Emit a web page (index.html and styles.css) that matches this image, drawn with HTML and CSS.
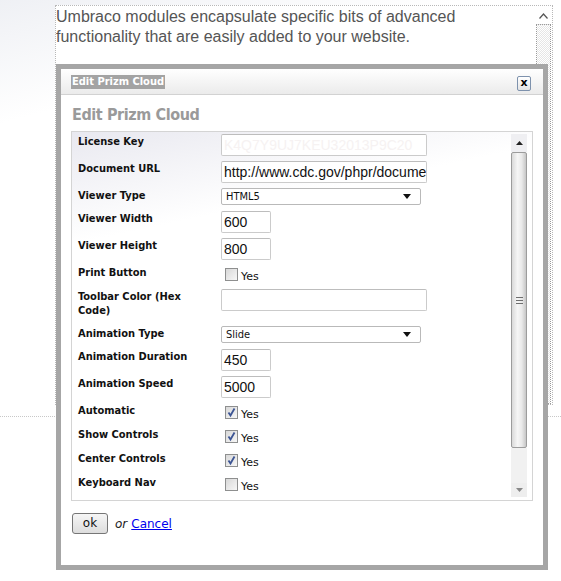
FILE: index.html
```html
<!DOCTYPE html>
<html>
<head>
<meta charset="utf-8">
<title>Edit Prizm Cloud</title>
<link rel="stylesheet" href="styles.css">
</head>
<body>
<div class="page">
  <div class="editor">
    <div class="editor-text">Umbraco modules encapsulate specific bits of advanced functionality that are easily added to your website.</div>
    <div class="editor-scroll">
      <svg class="editor-up" width="9" height="6" viewBox="0 0 9 6"><path d="M0.5 5.5 L4.5 1 L8.5 5.5" fill="none" stroke="#555" stroke-width="1.2"/></svg>
      <div class="editor-thumb"></div>
    </div>
  </div>
  <div class="rule"></div>
</div>

<div class="dialog">
  <div class="titlebar">
    <span class="title-sel">Edit Prizm Cloud</span>
    <span class="close">x</span>
  </div>
  <div class="dialog-body">
    <h2 class="heading">Edit Prizm Cloud</h2>
    <div class="panel">
      <div class="form">
        <div class="label">License Key</div>
        <div class="cell"><div class="input wide faint">K4Q7Y9UJ7KEU32013P9C20</div></div>

        <div class="label">Document URL</div>
        <div class="cell"><div class="input wide">http://www.cdc.gov/phpr/documer</div></div>

        <div class="label">Viewer Type</div>
        <div class="cell"><div class="select"><span>HTML5</span><svg width="8" height="5" viewBox="0 0 8 5"><path d="M0 0 H8 L4 5 Z" fill="#111"/></svg></div></div>

        <div class="label">Viewer Width</div>
        <div class="cell"><div class="input short">600</div></div>

        <div class="label">Viewer Height</div>
        <div class="cell"><div class="input short">800</div></div>

        <div class="label">Print Button</div>
        <div class="cell check"><span class="box"></span><span class="yes">Yes</span></div>

        <div class="label">Toolbar Color (Hex Code)</div>
        <div class="cell"><div class="input wide"></div></div>

        <div class="label">Animation Type</div>
        <div class="cell"><div class="select"><span>Slide</span><svg width="8" height="5" viewBox="0 0 8 5"><path d="M0 0 H8 L4 5 Z" fill="#111"/></svg></div></div>

        <div class="label">Animation Duration</div>
        <div class="cell"><div class="input short">450</div></div>

        <div class="label">Animation Speed</div>
        <div class="cell"><div class="input short">5000</div></div>

        <div class="label">Automatic</div>
        <div class="cell check"><span class="box"><svg width="11" height="11" viewBox="0 0 11 11"><path d="M2.5 5.5 L4.5 8.5 L8.5 1.5" fill="none" stroke="#3d5594" stroke-width="1.8"/></svg></span><span class="yes">Yes</span></div>

        <div class="label">Show Controls</div>
        <div class="cell check"><span class="box"><svg width="11" height="11" viewBox="0 0 11 11"><path d="M2.5 5.5 L4.5 8.5 L8.5 1.5" fill="none" stroke="#3d5594" stroke-width="1.8"/></svg></span><span class="yes">Yes</span></div>

        <div class="label">Center Controls</div>
        <div class="cell check"><span class="box"><svg width="11" height="11" viewBox="0 0 11 11"><path d="M2.5 5.5 L4.5 8.5 L8.5 1.5" fill="none" stroke="#3d5594" stroke-width="1.8"/></svg></span><span class="yes">Yes</span></div>

        <div class="label">Keyboard Nav</div>
        <div class="cell check"><span class="box"></span><span class="yes">Yes</span></div>
      </div>
      <div class="vscroll">
        <div class="sb-btn"><svg width="7" height="4" viewBox="0 0 7 4"><path d="M0 4 L3.5 0 L7 4 Z" fill="#222"/></svg></div>
        <div class="sb-thumb"><span class="grip"></span></div>
        <div class="sb-track"></div>
        <div class="sb-btn down"><svg width="7" height="4" viewBox="0 0 7 4"><path d="M0 0 H7 L3.5 4 Z" fill="#888"/></svg></div>
      </div>
    </div>
    <div class="footer">
      <span class="btn">ok</span>
      <em class="or">or</em>
      <a class="cancel" href="#">Cancel</a>
    </div>
  </div>
</div>
</body>
</html>
```

FILE: styles.css
```css
html, body {
  margin: 0;
  padding: 0;
}
body {
  width: 561px;
  height: 581px;
  overflow: hidden;
  position: relative;
  background:
    linear-gradient(165deg, rgba(232,234,240,0.7) 0, rgba(255,255,255,0) 120px),
    #fff;
  font-family: "Liberation Sans", Arial, sans-serif;
}
.page {
  padding-top: 5px;
}
.editor {
  margin-left: 55px;
  width: 498px;
  height: 400px;
  box-sizing: border-box;
  border: 1px dotted #b8b8b8;
  background: #fff;
  display: flex;
}
.editor-text {
  flex: 1;
  max-width: 440px;
  padding: 1px 0 0 0;
  font-size: 16px;
  line-height: 20px;
  color: #555;
}
.editor-scroll {
  margin-left: auto;
  width: 17px;
  display: flex;
  flex-direction: column;
  align-items: center;
}
.editor-up {
  margin-top: 7px;
}
.editor-thumb {
  margin-top: 5px;
  width: 15px;
  flex: 1;
  box-sizing: border-box;
  border: 1px dotted #9a9a9a;
  background: repeating-conic-gradient(#e6e6e6 0 25%, #ffffff 0 50%) 0 0 / 2px 2px;
}
.rule {
  margin-top: 11px;
  border-top: 1px dotted #c8c8c8;
}

/* Dialog */
.dialog {
  position: absolute;
  left: 56px;
  top: 64px;
  width: 492px;
  height: 506px;
  box-sizing: border-box;
  border: 5px solid #a6a6a6;
  background: #fff;
  font-family: "DejaVu Sans Condensed", "Noto Sans", sans-serif;
}
.titlebar {
  height: 25px;
  border-bottom: 1px solid #d2d2d2;
  background: linear-gradient(#ffffff, #ebebeb);
  display: flex;
  align-items: center;
  padding: 0 12px 0 10px;
}
.title-sel {
  background: #a3a3a3;
  color: #fff;
  font-weight: bold;
  font-size: 11px;
  line-height: 14px;
  padding: 0 1px;
}
.close {
  margin-left: auto;
  margin-top: 3px;
  width: 14px;
  height: 15px;
  box-sizing: border-box;
  border: 1px solid #7e92ad;
  border-radius: 2px;
  background: linear-gradient(#ffffff, #e4e4e4);
  font-family: "DejaVu Sans", sans-serif;
  font-weight: bold;
  font-size: 11px;
  line-height: 12px;
  text-align: center;
  color: #000;
}
.dialog-body {
  padding: 0 10px;
}
.heading {
  margin: 10px 0 6px 1px;
  font-size: 16px;
  line-height: 20px;
  font-weight: bold;
  letter-spacing: -0.4px;
  color: #9a9a9a;
}
.panel {
  width: 462px;
  height: 370px;
  box-sizing: border-box;
  border: 1px solid #d4d4d4;
  background: linear-gradient(168deg, #e9e9f0 0, #ffffff 110px);
  display: flex;
}
.form {
  flex: 1;
  overflow: hidden;
  padding: 2px 0 0 6px;
  display: grid;
  grid-template-columns: 143px 1fr;
  row-gap: 5px;
  align-content: start;
}
.label {
  font-weight: bold;
  font-size: 11px;
  line-height: 14px;
  padding: 1px 12px 3px 0;
  color: #111;
}
.cell {
  min-width: 0;
}
.input {
  height: 22px;
  box-sizing: border-box;
  border: 1px solid #cbcbcb;
  border-top-color: #bdbdbd;
  border-radius: 2px;
  background: #fff;
  font-family: "Liberation Sans", Arial, sans-serif;
  font-size: 14px;
  line-height: 20px;
  padding: 0 2px;
  white-space: nowrap;
  overflow: hidden;
  color: #111;
}
.input.wide { width: 206px; }
.input.short { width: 50px; }
.input.faint { color: #f6f2f2; }
.select {
  width: 200px;
  height: 17px;
  box-sizing: border-box;
  border: 1px solid #b9b9b9;
  border-radius: 2px;
  background: #fff;
  display: flex;
  align-items: center;
  padding: 0 9px 0 4px;
  font-size: 11px;
  color: #111;
}
.select svg {
  margin-left: auto;
}
.check {
  display: flex;
  align-items: flex-start;
  height: 19px;
}
.box {
  margin: 3px 0 0 4px;
  width: 13px;
  height: 13px;
  box-sizing: border-box;
  border: 1px solid #8e8f8f;
  background: linear-gradient(135deg, #d8d8d8, #f7f7f7);
  display: flex;
  align-items: center;
  justify-content: center;
}
.yes {
  margin: 5px 0 0 3px;
  font-family: "DejaVu Sans", sans-serif;
  font-size: 11px;
  line-height: 14px;
  color: #111;
}
.vscroll {
  width: 16px;
  margin: 2px 5px 3px 0;
  display: flex;
  flex-direction: column;
}
.sb-btn {
  height: 18px;
  background: #efeff2;
  display: flex;
  align-items: center;
  justify-content: center;
}
.sb-btn.down {
  height: 14px;
  background: #eeeeee;
}
.sb-thumb {
  height: 296px;
  box-sizing: border-box;
  border: 1px solid #9c9c9c;
  border-radius: 2px;
  background: linear-gradient(to right, #d9d9d9, #f6f6f6 40%, #e9e9e9 70%, #c6c6c6);
  display: flex;
  align-items: center;
  justify-content: center;
}
.grip {
  width: 7px;
  height: 5px;
  border-top: 1px solid #6e6e6e;
  border-bottom: 1px solid #6e6e6e;
  background: linear-gradient(#6e6e6e, #6e6e6e) center / 100% 1px no-repeat;
}
.sb-track {
  flex: 1;
  background: #f1f1f1;
}
.footer {
  margin-top: 12px;
  padding-left: 1px;
  display: flex;
  align-items: center;
}
.btn {
  width: 36px;
  height: 21px;
  box-sizing: border-box;
  border: 1px solid #767676;
  border-radius: 3px;
  background: linear-gradient(#f6f6f6, #dddddd);
  font-family: "DejaVu Sans", sans-serif;
  font-size: 12px;
  line-height: 19px;
  text-align: center;
  color: #111;
}
.or {
  margin-left: 7px;
  font-family: "DejaVu Sans", sans-serif;
  font-size: 12px;
  color: #222;
}
.cancel {
  margin-left: 4px;
  font-family: "DejaVu Sans", sans-serif;
  font-size: 12px;
  color: #0000ee;
  text-decoration: underline;
}
```
